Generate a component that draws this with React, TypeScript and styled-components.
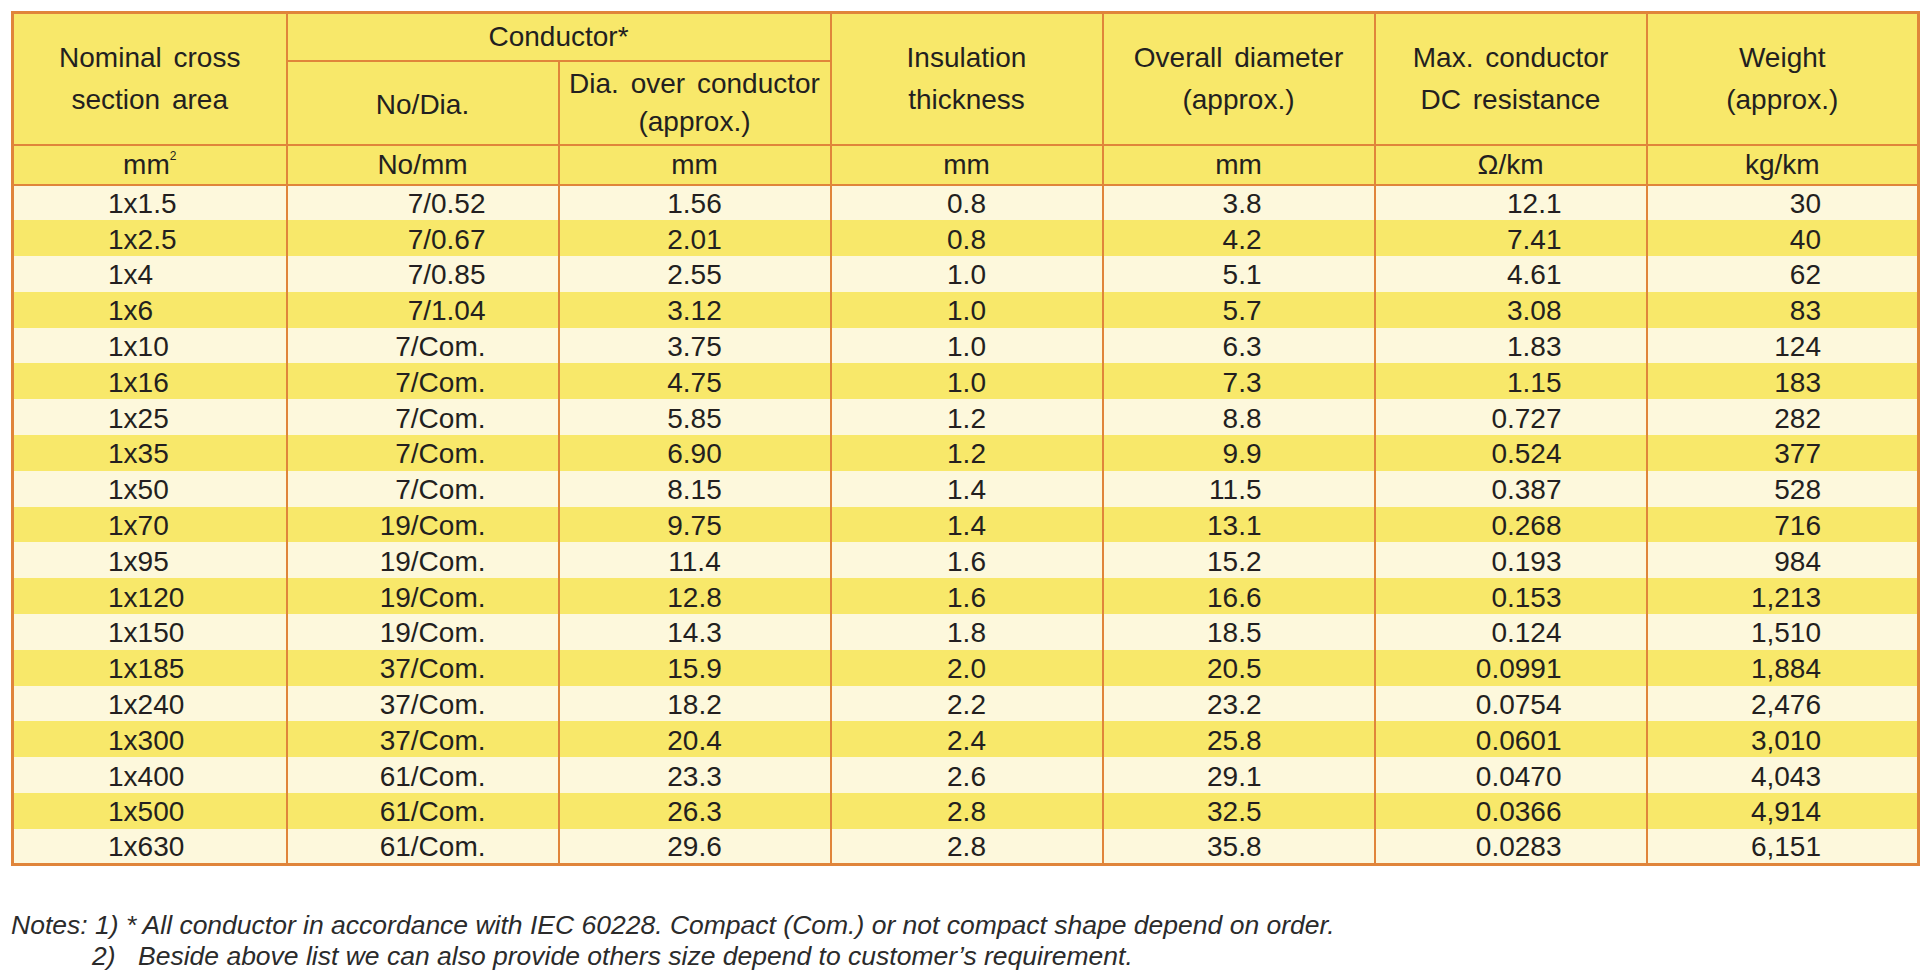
import styled, { createGlobalStyle } from "styled-components";

const GlobalStyle = createGlobalStyle`
  html, body {
    margin: 0;
    padding: 0;
    background: #ffffff;
  }
`;

const ORANGE = "#e0853a";
const YELLOW = "#f8e86a";
const PALE = "#fdf8dc";
const INK = "#231f20";

const Page = styled.div`
  padding: 11px 0 0 11px;
  font-family: "Liberation Sans", Arial, sans-serif;
  color: ${INK};
`;

const Table = styled.table`
  border-collapse: collapse;
  table-layout: fixed;
  width: 1906px;
  border: 3px solid ${ORANGE};
  font-size: 28px;
`;

const HeadCell = styled.th<{ $lh?: number }>`
  background: ${YELLOW};
  border: 2px solid ${ORANGE};
  font-weight: normal;
  text-align: center;
  vertical-align: middle;
  line-height: ${(p) => p.$lh ?? 42}px;
  padding: 0;
  white-space: nowrap;
  word-spacing: 4px;
`;

const UnitCell = styled.th`
  background: ${YELLOW};
  border: 2px solid ${ORANGE};
  font-weight: normal;
  text-align: center;
  height: 38px;
  padding: 0;
  line-height: 1;
`;

const Sup = styled.sup`
  font-size: 12px;
  vertical-align: 14px;
`;

const DataRow = styled.tr<{ $pale: boolean }>`
  background: ${(p) => (p.$pale ? PALE : YELLOW)};
  height: 35.8px;
`;

const DataCell = styled.td<{ $align: Align; $pad: number }>`
  border-left: 2px solid ${ORANGE};
  border-right: 2px solid ${ORANGE};
  text-align: ${(p) => p.$align};
  padding: 3px ${(p) => (p.$align === "right" ? p.$pad : 0)}px 0
    ${(p) => (p.$align === "left" ? p.$pad : 0)}px;
  line-height: 1;
  vertical-align: middle;
`;

const Notes = styled.div`
  margin-top: 44px;
  font-family: "Liberation Sans", Arial, sans-serif;
  font-style: italic;
  font-size: 26.5px;
  line-height: 31px;
  color: #2b2b2b;
`;

const NoteLine = styled.div<{ $indent?: number }>`
  display: flex;
  padding-left: ${(p) => p.$indent ?? 0}px;
  white-space: pre;
`;

const NoteNum = styled.span<{ $w: number }>`
  display: inline-block;
  width: ${(p) => p.$w}px;
`;

type Align = "left" | "right" | "center";

const columns: { align: Align; pad: number }[] = [
  { align: "left", pad: 94 },
  { align: "right", pad: 72 },
  { align: "center", pad: 0 },
  { align: "center", pad: 0 },
  { align: "right", pad: 112 },
  { align: "right", pad: 84 },
  { align: "right", pad: 96 },
];

const rows: string[][] = [
  ["1x1.5", "7/0.52", "1.56", "0.8", "3.8", "12.1", "30"],
  ["1x2.5", "7/0.67", "2.01", "0.8", "4.2", "7.41", "40"],
  ["1x4", "7/0.85", "2.55", "1.0", "5.1", "4.61", "62"],
  ["1x6", "7/1.04", "3.12", "1.0", "5.7", "3.08", "83"],
  ["1x10", "7/Com.", "3.75", "1.0", "6.3", "1.83", "124"],
  ["1x16", "7/Com.", "4.75", "1.0", "7.3", "1.15", "183"],
  ["1x25", "7/Com.", "5.85", "1.2", "8.8", "0.727", "282"],
  ["1x35", "7/Com.", "6.90", "1.2", "9.9", "0.524", "377"],
  ["1x50", "7/Com.", "8.15", "1.4", "11.5", "0.387", "528"],
  ["1x70", "19/Com.", "9.75", "1.4", "13.1", "0.268", "716"],
  ["1x95", "19/Com.", "11.4", "1.6", "15.2", "0.193", "984"],
  ["1x120", "19/Com.", "12.8", "1.6", "16.6", "0.153", "1,213"],
  ["1x150", "19/Com.", "14.3", "1.8", "18.5", "0.124", "1,510"],
  ["1x185", "37/Com.", "15.9", "2.0", "20.5", "0.0991", "1,884"],
  ["1x240", "37/Com.", "18.2", "2.2", "23.2", "0.0754", "2,476"],
  ["1x300", "37/Com.", "20.4", "2.4", "25.8", "0.0601", "3,010"],
  ["1x400", "61/Com.", "23.3", "2.6", "29.1", "0.0470", "4,043"],
  ["1x500", "61/Com.", "26.3", "2.8", "32.5", "0.0366", "4,914"],
  ["1x630", "61/Com.", "29.6", "2.8", "35.8", "0.0283", "6,151"],
];

export default function App() {
  return (
    <>
      <GlobalStyle />
      <Page>
        <Table>
          <colgroup>
            {columns.map((_, i) => (
              <col key={i} style={{ width: i === 0 ? 274 : 272 }} />
            ))}
          </colgroup>
          <thead>
            <tr style={{ height: 48 }}>
              <HeadCell rowSpan={2}>
                Nominal cross
                <br />
                section area
              </HeadCell>
              <HeadCell colSpan={2} $lh={40}>
                Conductor*
              </HeadCell>
              <HeadCell rowSpan={2}>
                Insulation
                <br />
                thickness
              </HeadCell>
              <HeadCell rowSpan={2}>
                Overall diameter
                <br />
                (approx.)
              </HeadCell>
              <HeadCell rowSpan={2}>
                Max. conductor
                <br />
                DC resistance
              </HeadCell>
              <HeadCell rowSpan={2}>
                Weight
                <br />
                (approx.)
              </HeadCell>
            </tr>
            <tr style={{ height: 84 }}>
              <HeadCell $lh={40} style={{ paddingTop: 4 }}>
                No/Dia.
              </HeadCell>
              <HeadCell $lh={38}>
                Dia. over conductor
                <br />
                (approx.)
              </HeadCell>
            </tr>
            <tr>
              <UnitCell>
                mm<Sup>2</Sup>
              </UnitCell>
              <UnitCell>No/mm</UnitCell>
              <UnitCell>mm</UnitCell>
              <UnitCell>mm</UnitCell>
              <UnitCell>mm</UnitCell>
              <UnitCell>Ω/km</UnitCell>
              <UnitCell>kg/km</UnitCell>
            </tr>
          </thead>
          <tbody>
            {rows.map((row, r) => (
              <DataRow key={row[0]} $pale={r % 2 === 0}>
                {row.map((v, c) => (
                  <DataCell key={c} $align={columns[c].align} $pad={columns[c].pad}>
                    {v}
                  </DataCell>
                ))}
              </DataRow>
            ))}
          </tbody>
        </Table>
        <Notes>
          <NoteLine>
            Notes: 1) * All conductor in accordance with IEC 60228. Compact (Com.) or not compact shape depend on order.
          </NoteLine>
          <NoteLine $indent={81}>
            <NoteNum $w={46}>2)</NoteNum>
            Beside above list we can also provide others size depend to customer’s requirement.
          </NoteLine>
        </Notes>
      </Page>
    </>
  );
}
